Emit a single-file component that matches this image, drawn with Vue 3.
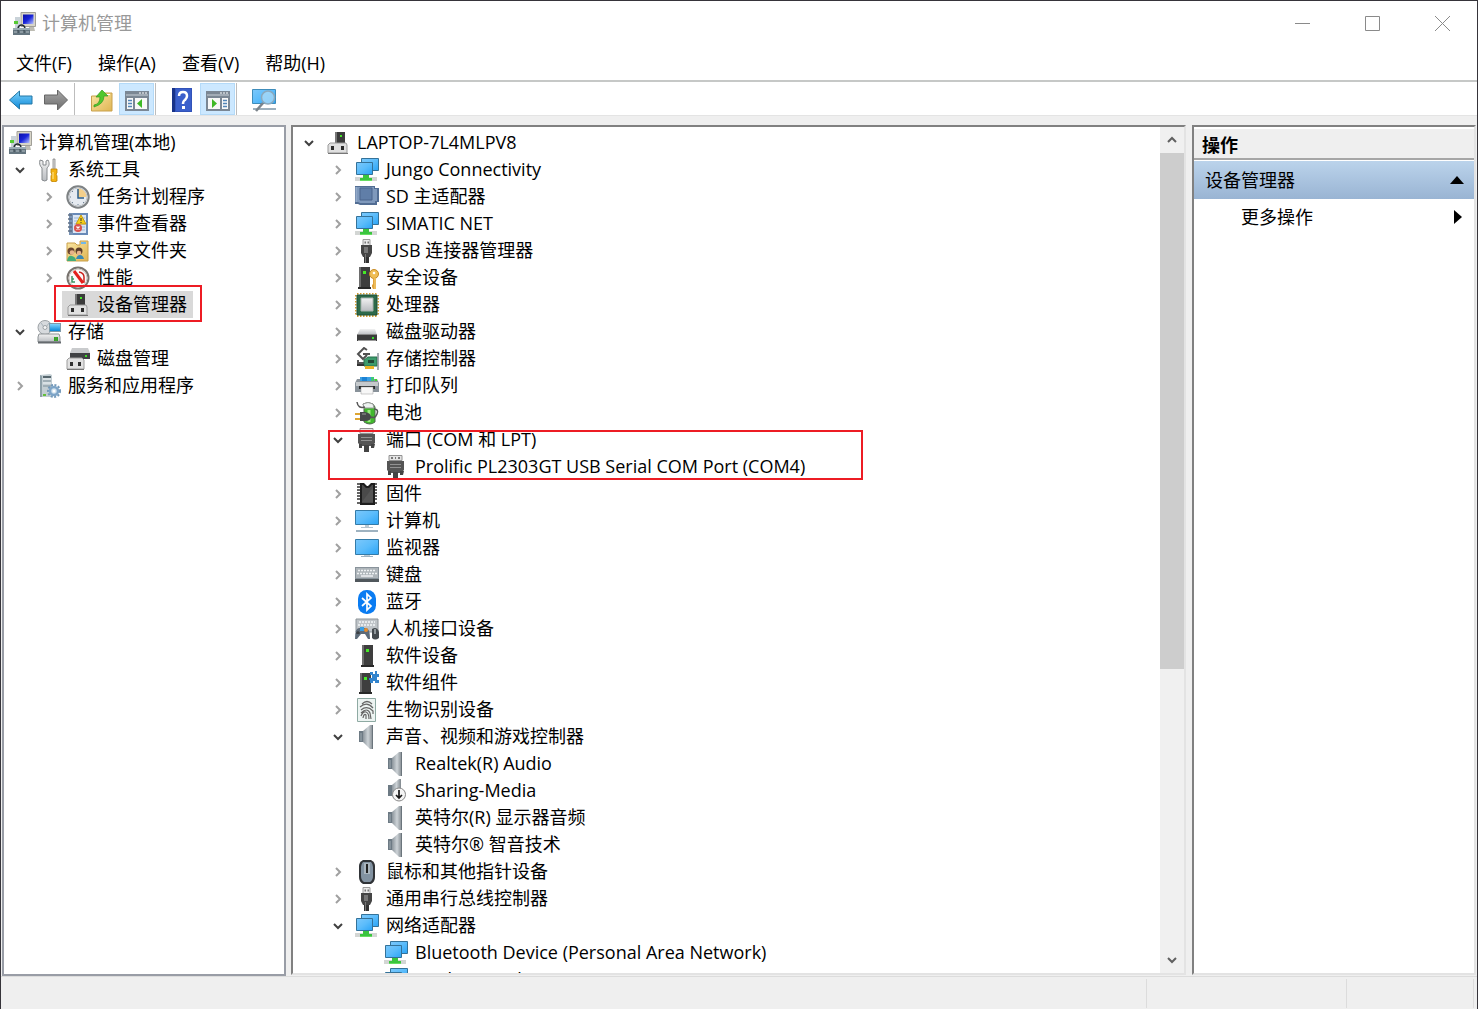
<script setup>
import { ref } from 'vue'

const menus = ['文件(F)', '操作(A)', '查看(V)', '帮助(H)']

const tools = [
  { icon: 'back', label: '后退' },
  { icon: 'forward', label: '前进' },
  { sep: true },
  { icon: 'up', label: '上一级' },
  { icon: 'tree', label: '显示/隐藏控制台树', on: true },
  { sep: true },
  { icon: 'help', label: '帮助' },
  { icon: 'pane', label: '显示/隐藏操作窗格', on: true },
  { sep: true },
  { icon: 'scan', label: '扫描检测硬件改动' },
]

// level = indentation step, open: true / false = expander state, leaf = blank expander cell
const consoleTree = ref([
  { text: '计算机管理(本地)', icon: 'mgmt', level: 0 },
  { text: '系统工具', icon: 'wrench', level: 0, open: true },
  { text: '任务计划程序', icon: 'clock', level: 1, open: false },
  { text: '事件查看器', icon: 'event', level: 1, open: false },
  { text: '共享文件夹', icon: 'share', level: 1, open: false },
  { text: '性能', icon: 'perf', level: 1, open: false },
  { text: '设备管理器', icon: 'device', level: 1, leaf: true, selected: true },
  { text: '存储', icon: 'storage', level: 0, open: true },
  { text: '磁盘管理', icon: 'diskmgmt', level: 1, leaf: true },
  { text: '服务和应用程序', icon: 'service', level: 0, open: false },
])

const devices = ref([
  { text: 'LAPTOP-7L4MLPV8', icon: 'device', level: 0, open: true },
  { text: 'Jungo Connectivity', icon: 'net', level: 1, open: false },
  { text: 'SD 主适配器', icon: 'sd', level: 1, open: false },
  { text: 'SIMATIC NET', icon: 'net', level: 1, open: false },
  { text: 'USB 连接器管理器', icon: 'usb', level: 1, open: false },
  { text: '安全设备', icon: 'security', level: 1, open: false },
  { text: '处理器', icon: 'cpu', level: 1, open: false },
  { text: '磁盘驱动器', icon: 'disk', level: 1, open: false },
  { text: '存储控制器', icon: 'controller', level: 1, open: false },
  { text: '打印队列', icon: 'printer', level: 1, open: false },
  { text: '电池', icon: 'battery', level: 1, open: false },
  { text: '端口 (COM 和 LPT)', icon: 'port', level: 1, open: true, marked: true },
  { text: 'Prolific PL2303GT USB Serial COM Port (COM4)', icon: 'port', level: 2, leaf: true },
  { text: '固件', icon: 'firmware', level: 1, open: false },
  { text: '计算机', icon: 'computer', level: 1, open: false },
  { text: '监视器', icon: 'monitor', level: 1, open: false },
  { text: '键盘', icon: 'keyboard', level: 1, open: false },
  { text: '蓝牙', icon: 'bluetooth', level: 1, open: false },
  { text: '人机接口设备', icon: 'hid', level: 1, open: false },
  { text: '软件设备', icon: 'tower', level: 1, open: false },
  { text: '软件组件', icon: 'component', level: 1, open: false },
  { text: '生物识别设备', icon: 'finger', level: 1, open: false },
  { text: '声音、视频和游戏控制器', icon: 'sound', level: 1, open: true },
  { text: 'Realtek(R) Audio', icon: 'sound', level: 2, leaf: true },
  { text: 'Sharing-Media', icon: 'sounddown', level: 2, leaf: true },
  { text: '英特尔(R) 显示器音频', icon: 'sound', level: 2, leaf: true },
  { text: '英特尔® 智音技术', icon: 'sound', level: 2, leaf: true },
  { text: '鼠标和其他指针设备', icon: 'mouse', level: 1, open: false },
  { text: '通用串行总线控制器', icon: 'usb', level: 1, open: false },
  { text: '网络适配器', icon: 'net', level: 1, open: true },
  { text: 'Bluetooth Device (Personal Area Network)', icon: 'net', level: 2, leaf: true },
  { text: 'Intel(R) Wireless-AC 9560', icon: 'net', level: 2, leaf: true },
])
</script>

<template>
  <svg class="defs" aria-hidden="true">
    <defs>
      <linearGradient id="gScreen" x1="0" y1="0" x2="1" y2="1"><stop offset="0" stop-color="#7cc8fb" /><stop offset=".5" stop-color="#5bbcfb" /><stop offset="1" stop-color="#2ba4f6" /></linearGradient>
      <linearGradient id="gBlue" x1="0" y1="0" x2="0" y2="1"><stop offset="0" stop-color="#7fd3fb" /><stop offset="1" stop-color="#0d88d8" /></linearGradient>
      <linearGradient id="gGrey" x1="0" y1="0" x2="0" y2="1"><stop offset="0" stop-color="#a8a8a8" /><stop offset="1" stop-color="#6c6c6c" /></linearGradient>
      <linearGradient id="gSteel" x1="0" y1="0" x2="1" y2="0"><stop offset="0" stop-color="#8b949b" /><stop offset=".5" stop-color="#cdd3d7" /><stop offset="1" stop-color="#7f878d" /></linearGradient>
      <linearGradient id="gFolder" x1="0" y1="0" x2="1" y2="1"><stop offset="0" stop-color="#fbe7a4" /><stop offset="1" stop-color="#dfb553" /></linearGradient>
      <linearGradient id="gNavy" x1="0" y1="0" x2="1" y2="1"><stop offset="0" stop-color="#0a0fa8" /><stop offset=".5" stop-color="#1a25d8" /><stop offset="1" stop-color="#b8c4ff" /></linearGradient>
      <linearGradient id="gLight" x1="0" y1="0" x2="0" y2="1"><stop offset="0" stop-color="#f2f2f2" /><stop offset="1" stop-color="#b9bcc0" /></linearGradient>
    </defs>
    <symbol id="i-mgmt" viewBox="0 0 24 24">
      <path d="M9 .5h14.500v14H9z" fill="#d8d5c8" stroke="#a09f98" /><path d="M11 2.500h10.500v9.500H11z" fill="url(#gNavy)" /><path d="M17 15h5l1 4h-6z" fill="#bdbcb3" />
      <path d="M3 5h5v11H3z" fill="#c9d2d8" /><path d="M2 9h4v3H2z" fill="#55c934" />
      <path d="M6 16c1-4 6-4 7 0" fill="none" stroke="#222c33" stroke-width="1.500" />
      <path d="M1 16h17v7H1z" fill="#64757f" /><path d="M1 16h17v2H1z" fill="#9aabb4" /><path d="M2 20h4m2 0h4m2 0h3" stroke="#b4c0c6" stroke-width="1" /><path d="M6 18v3m6-3v3" stroke="#34434c" />
    </symbol>
    <symbol id="i-wrench" viewBox="0 0 24 24">
      <path d="M3 2c-1 4 0 6 2 8v12q3 2 5 0V10c2-2 3-4 1-8l-2 1v4H6V3z" fill="url(#gLight)" stroke="#85898c" />
      <path d="M16 1h2v11h-2z" fill="#ddd" stroke="#777" stroke-width=".7" /><path d="M14 11h6v4l-1 1 1 2v5q-3 2-6 0v-5l1-2-1-1z" fill="#f4b211" stroke="#bd8206" stroke-width=".8" /><path d="M16 14v7" stroke="#ffe99b" />
    </symbol>
    <symbol id="i-clock" viewBox="0 0 24 24">
      <circle cx="12" cy="12" r="10.700" fill="#e5eaf0" stroke="#7e8284" stroke-width="2" /><circle cx="12" cy="12" r="9" fill="none" stroke="#bfc3c6" /><path d="M12 12V3.500a8.500 8.500 0 0 1 8.500 8.500z" fill="#f3cf8b" /><path d="M12 4v9h6" fill="none" stroke="#2d5e88" stroke-width="1.500" /><path d="M4 12h1m7 7v1M6 6l1 1m11 11-1-1M6 18l1-1" stroke="#718497" />
    </symbol>
    <symbol id="i-event" viewBox="0 0 24 24">
      <path d="M3 1h19v22H3z" fill="#688ab8" /><path d="M7 3h13v18H7z" fill="#dbe6f4" /><path d="M3 1h4v22H3z" fill="#7893b5" /><path d="M8 6h11M8 9h11M8 12h11M8 15h11M8 18h11" stroke="#9cb6d7" />
      <path d="M2 3h4M2 7h4M2 11h4M2 15h4M2 19h4" stroke="#5f6f84" stroke-width="1.500" /><path d="m15 3 5 9H10z" fill="#f5cf19" stroke="#c89b10" /><path d="M15 6v3m0 1v1" stroke="#343434" /><circle cx="12" cy="16" r="4" fill="#d9534e" /><path d="m10.500 14.500 3 3m0-3-3 3" stroke="#fff" stroke-width="1.300" />
    </symbol>
    <symbol id="i-share" viewBox="0 0 24 24">
      <path d="M1 4h8l2 2h3V2h8v20H1z" fill="url(#gFolder)" stroke="#caa04a" /><path d="M15 3h5v2h-5z" fill="#72b8e9" /><circle cx="5" cy="12" r="3.500" fill="#6c4630" /><circle cx="13" cy="12" r="3.500" fill="#5b3d2a" /><circle cx="6" cy="13.500" r="2.300" fill="#e7b38b" /><circle cx="13" cy="14" r="2.300" fill="#e7b38b" /><path d="M1 22q1-6 5-5t4 5z" fill="#43ad78" /><path d="M10 20q1-4 4-4t4 4z" fill="#3988b3" />
    </symbol>
    <symbol id="i-perf" viewBox="0 0 24 24">
      <circle cx="12" cy="12" r="10.500" fill="#fafafa" stroke="#78736e" stroke-width="2" /><circle cx="12" cy="12" r="9" fill="none" stroke="#c9c4be" /><path d="M13 6q5 1 5 5v5h-3" stroke="#c9221d" stroke-width="1.500" fill="none" /><path d="M6 10v6h3m-3-3h2" stroke="#3d9262" stroke-width="1.500" fill="none" /><path d="m8 5 9 12" stroke="#e3201c" stroke-width="3" />
    </symbol>
    <symbol id="i-device" viewBox="0 0 24 24">
      <path d="M11 1h8v11h-8z" fill="#3b3b3b" /><path d="M9 1h2v11H9z" fill="#777" /><path d="M14 4h2v2h-2z" fill="#47e52a" /><path d="M4 12h16l1 2v8H2v-8z" fill="#e0e0e0" stroke="#9b9b9b" /><path d="M2 22.500h20" stroke="#777" /><path d="M5 15h3v4H5zM15 15h3v4h-3z" fill="#2c2c2c" />
    </symbol>
    <symbol id="i-storage" viewBox="0 0 24 24">
      <circle cx="8" cy="7.500" r="7" fill="#d7dadd" stroke="#9da2a6" /><path d="m4 3 3 4M12 3 9 7" stroke="#a9b3ba" /><circle cx="8" cy="7.500" r="2" fill="#f4f4f4" stroke="#9da2a6" /><path d="M12 3h12v9H12z" fill="#7f9baa" /><path d="M13 4h10v7H13z" fill="url(#gBlue)" /><path d="M2 14h20l1 3v5H1v-5z" fill="url(#gLight)" stroke="#8f9497" /><path d="M1 22.500h23" stroke="#656a6e" stroke-width="2" /><path d="M17 17h4v4h-4z" fill="#2bab22" /><path d="M19 17v4" stroke="#6d8d4b" />
    </symbol>
    <symbol id="i-diskmgmt" viewBox="0 0 24 24">
      <path d="M6 1h16l2 5H4z" fill="#c9cbcd" /><path d="M4 6h20v6H4z" fill="#404244" /><path d="M19 8h2v2h-2z" fill="#40de27" /><path d="M3 11h13l2 2v9H1v-9z" fill="#e1e1e1" stroke="#9d9d9d" /><path d="M4 15h3v4H4zM12 15h3v4h-3z" fill="#303030" /><path d="M1 22.500h17" stroke="#777" />
    </symbol>
    <symbol id="i-service" viewBox="0 0 24 24">
      <path d="m3 1 10-1 2 1v22H3z" fill="#c3ced3" /><path d="m3 1 2 1v21H3z" fill="#8ea0a8" /><path d="M6 3h8" stroke="#33444d" stroke-width="1.500" /><path d="M6 7h8M6 12h8" stroke="#7d8f98" /><path d="M6 5h8M6 9h8" stroke="#eef3f5" /><path d="M6 20h3v2H6z" fill="#63bf3a" />
      <circle cx="17" cy="17" r="6" fill="none" stroke="#7298b9" stroke-width="2" stroke-dasharray="2 1.500" /><circle cx="17" cy="17" r="4" fill="#cfe0ed" stroke="#7da4c7" stroke-width="2.500" /><circle cx="17" cy="17" r="1.500" fill="#fff" />
    </symbol>
    <symbol id="i-net" viewBox="0 0 24 24">
      <path d="M0 19h22v4H0z" fill="#d3d6d4" /><path d="M6.500 .5h17v12h-17z" fill="url(#gScreen)" stroke="#347299" /><path d="M1.500 4.500h16v12h-16z" fill="url(#gScreen)" stroke="#347299" /><path d="M8 17h6v3h3v3H5v-3h3z" fill="#3ac53e" /><path d="M5 22.500h12" stroke="#67dc62" />
    </symbol>
    <symbol id="i-sd" viewBox="0 0 24 24">
      <path d="M0 1h20v2h4v14h-2v3H5l-2-1H0z" fill="#526d93" /><path d="M1 2h18v2h3v12h-2v2H5l-2-1H1z" fill="#7f99bc" /><path d="M5 3h12v12H5z" fill="#607ea8" stroke="#4a658c" /><path d="M1 2v15" stroke="#a5bad4" />
    </symbol>
    <symbol id="i-usb" viewBox="0 0 24 24">
      <path d="M8 .5h7v6H8z" fill="#e9e9e9" stroke="#9c9c9c" /><path d="M9.500 2.500h1.500v2H9.500zM12.500 2.500H14v2h-1.500z" fill="#777" /><path d="M6 6h11v8l-2 4H8l-2-4z" fill="#454545" /><path d="M9 18h5v6H9z" fill="#333" /><path d="M9 8h4v6H9z" fill="#777" /><path d="M10.500 15v9" stroke="#777" />
    </symbol>
    <symbol id="i-tower" viewBox="0 0 24 24">
      <path d="M7 1h11v20H7z" fill="#3e3e3e" /><path d="M7 1h2v20H7z" fill="#6d6d6d" /><path d="M6 21h13v2H6z" fill="#292929" /><path d="M11 5h3v3h-3z" fill="#45ea27" />
    </symbol>
    <symbol id="i-security" viewBox="0 0 24 24">
      <path d="M4 1h11v20H4z" fill="#3e3e3e" /><path d="M4 1h2v20H4z" fill="#6d6d6d" /><path d="M3 21h13v2H3z" fill="#292929" /><path d="M8 5h3v3H8z" fill="#45ea27" /><circle cx="19" cy="8" r="4.500" fill="#efbd56" stroke="#c78b25" /><circle cx="19" cy="7" r="1.300" fill="#fff" /><path d="M18 12h3v11h-3l-1-2v-2l1-1z" fill="#e1a43b" /><path d="M20 12v11" stroke="#f7d27e" />
    </symbol>
    <symbol id="i-component" viewBox="0 0 24 24">
      <path d="M5 2h11v19H5z" fill="#3e3e3e" /><path d="M5 2h2v19H5z" fill="#6d6d6d" /><path d="M4 21h13v2H4z" fill="#292929" /><path d="M9 6h3v3H9z" fill="#45ea27" /><path d="M15 1h3v2h2V0h2v3h2v3h-2v3h2v3h-4v-2h-2v2h-3V9h-1V7h3V4h-2z" fill="#3284cd" />
    </symbol>
    <symbol id="i-cpu" viewBox="0 0 24 24">
      <path d="M2 .5h21M2 23h21" stroke="#d39b2f" stroke-width="2" stroke-dasharray="1.500 1.500" /><path d="M.5 2v21M23.500 2v21" stroke="#d39b2f" stroke-width="2" stroke-dasharray="1.500 1.500" /><path d="M2 2h20v20H2z" fill="#2d6a4a" stroke="#1c5136" /><path d="M6 5h12v13H6z" fill="url(#gLight)" stroke="#a8b4ad" />
    </symbol>
    <symbol id="i-disk" viewBox="0 0 24 24">
      <path d="m5 9 15 0 2 6H2z" fill="url(#gLight)" /><path d="M2 14h20v7H2z" fill="#3c3c3c" /><path d="M2 14h20v1H2z" fill="#8a8a8a" /><path d="M17 17h2v2h-2z" fill="#39de2c" /><path d="M3 20.500h18" stroke="#9a9a9a" />
    </symbol>
    <symbol id="i-controller" viewBox="0 0 24 24">
      <path d="m12 3-3-2-6 6 5 5 4-4M8 7h7" fill="none" stroke="#515151" stroke-width="2" /><path d="M3 13v3h8" stroke="#555" stroke-width="2" fill="none" /><path d="m9 13 4-3h9v9H9z" fill="#3d9b6c" stroke="#26714c" /><path d="M23 6v17" stroke="#879198" stroke-width="1.500" /><path d="M13 13h6v3h-6z" fill="#214836" /><path d="M10 19h9v3h-9z" fill="#eab327" /><path d="M2 17h7v2H2z" fill="#333" />
    </symbol>
    <symbol id="i-printer" viewBox="0 0 24 24">
      <path d="M5 3h14v5H5z" fill="#3b9fe3" /><path d="M16 3h3v5h-3z" fill="#3fca75" /><path d="M7 3h5v5H7z" fill="#1b83d6" /><path d="M2 5h3v2h14V5h3l2 4v9H0V9z" fill="#89929a" /><path d="M1 8h22v4H1z" fill="#c5c9cc" /><path d="M4 12h16v3H4z" fill="#292b2c" /><path d="M6 13h12v7H6z" fill="#f7f7f7" stroke="#999" stroke-width=".5" /><path d="M20 5h2v2h-2z" fill="#45db28" />
    </symbol>
    <symbol id="i-battery" viewBox="0 0 24 24">
      <path d="M8 3q5-3 10 0l2 3v15q-5 4-11 0V5z" fill="#41b82d" stroke="#51664e" /><path d="M8 3q5-3 10 0l1 4H9z" fill="#ecf2ef" stroke="#999" /><path d="M14 9v12" stroke="#9be980" stroke-width="3" /><path d="M2 1q1 7 8 5M19 8q5 0 3 5-2 5-6 3" fill="none" stroke="#555" stroke-width="1.500" /><path d="M0 13h6M0 18h6" stroke="#dda533" stroke-width="2" /><path d="M5 11h5q6 1 6 5t-6 4H5z" fill="#47484a" /><path d="M7 13h4" stroke="#999" />
    </symbol>
    <symbol id="i-port" viewBox="0 0 24 24">
      <path d="M5 .5h13v5H5z" fill="#e3e3e3" stroke="#929292" /><path d="M7 3h2m2 0h1m2 0h2" stroke="#777" stroke-width="2" /><path d="M3 6h17v9l-3 3H6l-3-3z" fill="#555" /><path d="M4 16h3v4H4zM16 16h4l-1 4h-3zM9 17h5v7H9z" fill="#444" /><path d="M6 9.500h11M6 12.500h11" stroke="#929292" />
    </symbol>
    <symbol id="i-firmware" viewBox="0 0 24 24">
      <path d="M2 2h4m-4 3h4M2 8h4m-4 3h4m-4 3h4m-4 3h4m-4 4h4m12-19h4m-4 3h4m-4 3h4m-4 3h4m-4 3h4m-4 3h4m-4 4h4" stroke="#333" stroke-width="1.500" /><path d="M5 1h4l3 3h1l3-3h4v22H5z" fill="#1e1e1e" /><path d="M7 3h1l3 3h3l3-3h1v18H7z" fill="#4a4a4a" /><path d="M7 20 18 5v15z" fill="#555" />
    </symbol>
    <symbol id="i-computer" viewBox="0 0 24 24">
      <path d="M.5 1.500h23v14H.5z" fill="url(#gScreen)" stroke="#347ba8" /><path d="M10 16h4v2h-4z" fill="#bdcbd4" /><path d="M6 18.500h12" stroke="#b5c4ce" /><path d="M1 21h22v2H1z" fill="#9eb2c0" />
    </symbol>
    <symbol id="i-monitor" viewBox="0 0 24 24">
      <path d="M.5 3.500h23v15H.5z" fill="url(#gScreen)" stroke="#347ba8" /><path d="M9 19h6v1H9z" fill="#bdcbd4" /><path d="M6 20.500h12" stroke="#9eb2c0" />
    </symbol>
    <symbol id="i-keyboard" viewBox="0 0 24 24">
      <path d="M0 4h24v15H0z" fill="#89939b" /><path d="M1 5h22v10H1z" fill="#aeb5ba" /><path d="M3 7.500h18M2 10.500h20" stroke="#eef1f3" stroke-width="1.500" stroke-dasharray="2 1" /><path d="M6 13h12" stroke="#eef1f3" stroke-width="1.500" /><path d="M0 16h24v3H0z" fill="#50575c" />
    </symbol>
    <symbol id="i-bluetooth" viewBox="0 0 24 24">
      <rect x="3" width="18" height="24" rx="8.500" fill="#0a7cf2" /><path d="m7 8 9 8-4 4V4l4 4-9 8" fill="none" stroke="#fff" stroke-width="1.700" />
    </symbol>
    <symbol id="i-hid" viewBox="0 0 24 24">
      <path d="M1 2h22v13H1z" fill="#bfc4c8" stroke="#8d9499" /><path d="M4 5h16M3 8h18" stroke="#f4f6f7" stroke-width="1.500" stroke-dasharray="2 1" /><path d="M0 22q0-11 4-11h7q4 0 4 11h-2l-3-5H6l-4 5z" fill="#5d6b79" /><path d="M5 10h4v4H5z" fill="#3a9ee2" /><circle cx="11" cy="13" r="2" fill="#e78d2e" /><path d="M3 14v3m-2-1h4" stroke="#333" /><path d="M17 12q5-3 7 3v6q-4 3-7 0z" fill="#44494d" /><path d="M20 12v5" stroke="#a9b0b5" stroke-width="1.500" />
    </symbol>
    <symbol id="i-finger" viewBox="0 0 24 24">
      <path d="M2.500 .5h18v23h-18z" fill="#edf4f2" stroke="#8eaaa3" /><path d="M7 6q5-5 10 0M5 9q7-6 13 1M6 12q6-5 12 1v3M6 15q6-6 9 0l1 6M6 18q2-5 5-4t3 7M8 20q1-5 3-3v4" fill="none" stroke="#666" stroke-width="1.200" />
    </symbol>
    <symbol id="i-sound" viewBox="0 0 24 24">
      <path d="M4 6h5v11H4z" fill="#6d7a84" /><path d="m8 6 7-6h3v24h-3l-7-7z" fill="url(#gSteel)" /><path d="M17.500 0v24" stroke="#6b757c" /><path d="M6 8v8" stroke="#9faab1" />
    </symbol>
    <symbol id="i-sounddown" viewBox="0 0 24 24">
      <path d="M4 6h5v11H4z" fill="#6d7a84" /><path d="m8 6 7-6h2v20h-4l-5-3z" fill="url(#gSteel)" /><circle cx="15" cy="15.500" r="6.500" fill="#f5f5f5" stroke="#888" /><path d="M15 11v8m-3-3 3 3 3-3" fill="none" stroke="#171717" stroke-width="1.700" />
    </symbol>
    <symbol id="i-mouse" viewBox="0 0 24 24">
      <path d="M8 0h8q4 2 4 6v11q0 5-4 7H8q-4-2-4-7V6q0-4 4-6z" fill="#303337" /><path d="M8 2h8q2 2 2 5v9q0 4-3 6H9q-3-2-3-6V7q0-3 2-5z" fill="#8292a1" /><path d="M9 3h6v11H9z" fill="#aab5be" /><path d="M12 4v9" stroke="#222" stroke-width="2" />
    </symbol>
    <symbol id="i-back" viewBox="0 0 24 24"><path d="m.5 12 10-9v5H23v8H10.500v5z" fill="url(#gBlue)" stroke="#2377a5" /></symbol>
    <symbol id="i-forward" viewBox="0 0 24 24"><path d="m23.500 12-10-10v5H.5v9h13v6z" fill="url(#gGrey)" stroke="#656565" /></symbol>
    <symbol id="i-up" viewBox="0 0 24 24"><path d="M1.500 8H11l2-3h9v18H1.500z" fill="url(#gFolder)" stroke="#c9a04d" /><path d="M15 6.500h5" stroke="#fff" /><path d="M4 17q6-1 6-8H6l6-7 6 6h-4q0 8-10 11z" fill="#50c72e" stroke="#359a20" stroke-width=".7" /></symbol>
    <symbol id="i-tree" viewBox="0 0 24 24"><path d="M0 3h24v20H0z" fill="#7b8794" /><path d="M2 10h6v11H2zM10 10h12v11H10z" fill="#f8f8f8" /><path d="M1 7h22" stroke="#cad1d8" /><path d="M14 5h2m1 0h2m1 0h2" stroke="#fff" /><path d="M3 12.500h4m-4 3h4m-4 3h4" stroke="#5285b7" stroke-width="1.500" /><path d="M17 11v9l-5-4.500z" fill="#3eb926" /></symbol>
    <symbol id="i-pane" viewBox="0 0 24 24"><path d="M0 3h24v20H0z" fill="#7b8794" /><path d="M2 10h12v11H2zM16 10h6v11h-6z" fill="#f8f8f8" /><path d="M1 7h22" stroke="#cad1d8" /><path d="M14 5h2m1 0h2m1 0h2" stroke="#fff" /><path d="M17 12.500h4m-4 3h4m-4 3h4" stroke="#5285b7" stroke-width="1.500" /><path d="M6 11v9l5-4.500z" fill="#3eb926" /></symbol>
    <symbol id="i-help" viewBox="0 0 24 24"><path d="M1 0h20v24H1z" fill="#3a5fcb" /><path d="M1 0h3v24H1z" fill="#183389" /><path d="M4.500.5h16v23h-16z" fill="none" stroke="#3152b8" /><path d="M8 8q0-4 4-4t4 4q0 2-2 4-2 1-2 4" fill="none" stroke="#fff" stroke-width="2.500" /><path d="M11 18h3v3h-3z" fill="#fff" /></symbol>
    <symbol id="i-scan" viewBox="0 0 24 24"><path d="M.5 1.500h23v14H.5z" fill="url(#gScreen)" stroke="#3f8dbb" /><path d="M1 20h23v2H1z" fill="#9db0bd" /><circle cx="16" cy="9.500" r="6.500" fill="#a9d9f8" fill-opacity=".8" stroke="#8ba9be" stroke-width="1.500" /><path d="m11 15-7 8" stroke="#7c848b" stroke-width="2.500" /></symbol>
  </svg>

  <div class="window">
    <header class="titlebar">
      <svg class="icon"><use href="#i-mgmt" /></svg>
      <h1>计算机管理</h1>
      <button type="button" aria-label="最小化"><svg viewBox="0 0 15 15"><path d="M0 7.500h15" /></svg></button>
      <button type="button" aria-label="最大化"><svg viewBox="0 0 15 15"><path d="M.5.5h14v14H.5z" /></svg></button>
      <button type="button" aria-label="关闭"><svg viewBox="0 0 15 15"><path d="m0 0 15 15M15 0 0 15" /></svg></button>
    </header>

    <nav class="menubar">
      <button v-for="m in menus" :key="m" type="button">{{ m }}</button>
    </nav>

    <div class="toolbar" role="toolbar">
      <template v-for="(t, i) in tools" :key="i">
        <span v-if="t.sep" class="sep"></span>
        <button v-else type="button" :class="{ on: t.on }" :aria-label="t.label"><svg class="icon"><use :href="'#i-' + t.icon" /></svg></button>
      </template>
    </div>

    <main class="panes">
      <section class="pane console">
        <ul class="tree">
          <li v-for="n in consoleTree" :key="n.text" :class="['row', 'l' + n.level]">
            <button v-if="n.open !== undefined" type="button" :class="['expander', { open: n.open }]" :aria-label="n.text" @click="n.open = !n.open"><svg viewBox="0 0 12 12"><path d="m4 2 4 4-4 4" /></svg></button>
            <span v-else-if="n.leaf" class="expander"></span>
            <span :class="['node', { selected: n.selected }]"><svg class="icon"><use :href="'#i-' + n.icon" /></svg><span>{{ n.text }}</span></span>
            <span v-if="n.selected" class="mark mark-node"></span>
          </li>
        </ul>
      </section>

      <section class="pane sunken devices">
        <ul class="tree">
          <li v-for="n in devices" :key="n.text" :class="['row', 'l' + n.level]">
            <button v-if="n.open !== undefined" type="button" :class="['expander', { open: n.open }]" :aria-label="n.text" @click="n.open = !n.open"><svg viewBox="0 0 12 12"><path d="m4 2 4 4-4 4" /></svg></button>
            <span v-else class="expander"></span>
            <span class="node"><svg class="icon"><use :href="'#i-' + n.icon" /></svg><span>{{ n.text }}</span></span>
            <span v-if="n.marked" class="mark mark-port"></span>
          </li>
        </ul>
        <div class="scrollbar">
          <button type="button" aria-label="向上滚动"><svg viewBox="0 0 12 12"><path d="m2 8 4-4 4 4" /></svg></button>
          <div class="track"><div class="thumb"></div></div>
          <button type="button" aria-label="向下滚动"><svg viewBox="0 0 12 12"><path d="m2 4 4 4 4-4" /></svg></button>
        </div>
      </section>

      <aside class="pane sunken actions">
        <h2>操作</h2>
        <button type="button" class="group"><span>设备管理器</span><svg viewBox="0 0 14 8"><path d="m7 0 7 8H0z" /></svg></button>
        <button type="button" class="more"><span>更多操作</span><svg viewBox="0 0 8 14"><path d="m0 0 8 7-8 7z" /></svg></button>
      </aside>
    </main>

    <footer class="status"><span></span><span></span><span></span></footer>
  </div>
</template>

<style>
body { background: #efefef; }
</style>

<style scoped>
.defs { position: absolute; width: 0; height: 0; }
.window {
  box-sizing: border-box;
  display: flex;
  flex-direction: column;
  height: 100vh;
  border: 1px solid #36343a;
  border-bottom: 0;
  background: #efefef;
  color: #000;
  font: 18px/27px "Open Sans", "Noto Sans CJK SC", sans-serif;
}
button { margin: 0; padding: 0; border: 0; background: none; color: inherit; font: inherit; }
h1, h2, ul { margin: 0; padding: 0; }
.icon { flex: none; display: block; width: 24px; height: 24px; }

.titlebar { flex: none; display: flex; align-items: center; height: 45px; padding-left: 11px; background: #fff; }
.titlebar h1 { flex: 1; padding-left: 6px; color: #999; font-size: 18px; font-weight: 400; }
.titlebar button { display: grid; place-items: center; width: 70px; height: 45px; }
.titlebar button svg { width: 15px; height: 15px; fill: none; stroke: #8a8a8a; }

.menubar { flex: none; display: flex; gap: 26px; height: 34px; padding-left: 15px; border-bottom: 2px solid #c6c8c7; background: #fff; }

.toolbar { flex: none; display: flex; align-items: center; height: 32px; padding: 1px 2px 0; background: #fff; border-bottom: 1px solid #e4e4e4; }
.toolbar button { box-sizing: border-box; display: grid; place-items: center; width: 35px; height: 32px; padding-top: 2px; border: 1px solid transparent; }
.toolbar button.on { border-color: #b4daf8; background: #cce8ff; }
.sep { width: 1px; height: 32px; margin: 0 9px 0 1px; background: #bdbdbd; }

.panes { flex: 1; min-height: 0; display: flex; gap: 5px; padding: 9px 1px 0; }
.pane { box-sizing: border-box; overflow: hidden; background: #fff; }
.console { flex: 0 0 284px; padding-top: 2px; border: 2px solid #999da6; }
.sunken { margin-bottom: 1px; border: 2px solid; border-color: #808080 #e3e3e3 #e3e3e3 #808080; }
.devices { flex: 1; min-width: 0; display: flex; margin-right: 1px; }
.devices .tree { flex: 1; min-width: 0; padding-top: 2px; }
.actions { display: flex; flex-direction: column; flex: 0 0 284px; padding-top: 2px; }

.tree { list-style: none; }
.row { position: relative; display: flex; height: 27px; padding-left: 4px; white-space: nowrap; }
.l1 { padding-left: 33px; }
.l2 { padding-left: 62px; }
.expander { flex: none; display: grid; place-items: center; width: 24px; height: 27px; margin-right: 5px; }
.expander svg { width: 12px; height: 12px; fill: none; stroke: #a0a0a0; stroke-width: 2px; }
.expander.open svg { stroke: #404040; transform: rotate(90deg); }
.node { display: flex; align-items: center; gap: 7px; height: 27px; }
.node.selected { margin-left: -4px; padding: 0 6px 0 4px; background: #d9d9d9; }
.mark { position: absolute; box-sizing: border-box; border: 2px solid #ed1c24; pointer-events: none; }
.mark-node { left: 50px; top: -6px; width: 148px; height: 37px; }
.mark-port { left: 35px; top: 4px; width: 535px; height: 50px; z-index: 1; }

.scrollbar { flex: none; display: flex; flex-direction: column; width: 24px; background: #f0f0f0; }
.scrollbar button { display: grid; place-items: center; height: 26px; }
.scrollbar svg { width: 12px; height: 12px; fill: none; stroke: #606060; stroke-width: 2px; }
.track { flex: 1; }
.thumb { height: 65%; background: #cdcdcd; }

.actions h2 { height: 29px; padding-left: 8px; border-bottom: 2px solid #a6a6a6; background: #efefef; font-size: 18px; line-height: 32px; }
.group { display: flex; align-items: center; justify-content: space-between; height: 38px; margin-top: 1px; padding: 0 10px 0 11px; background: linear-gradient(#bbd3eb, #99b4d3); }
.group svg { width: 14px; height: 8px; }
.more { display: flex; align-items: center; justify-content: space-between; height: 36px; padding: 0 12px 0 47px; }
.more svg { width: 8px; height: 14px; }

.status { flex: none; box-sizing: border-box; display: flex; justify-content: flex-end; height: 33px; padding: 2px 3px 1px; border-top: 1px solid #dcdcdc; }
.status span { box-sizing: border-box; width: 200px; border-right: 1px solid #dcdcdc; }
.status span:last-child { width: 127px; }
</style>
